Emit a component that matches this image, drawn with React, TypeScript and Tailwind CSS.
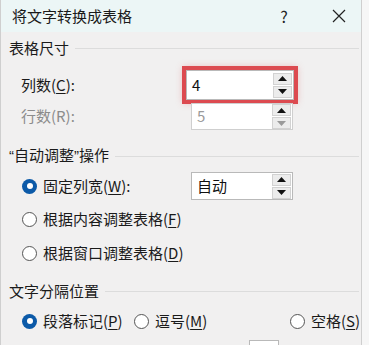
import React from "react";

const font = { fontFamily: '"Noto Sans CJK SC", "Noto Sans", sans-serif' };
const latin = { fontFamily: '"Liberation Sans", sans-serif' };

function Arrow({ up, dim }: { up?: boolean; dim?: boolean }) {
  return (
    <svg width="9" height="5" viewBox="0 0 9 5">
      <polygon points={up ? "0,5 9,5 4.5,0" : "0,0 9,0 4.5,5"} fill={dim ? "#9a9a9a" : "#111"} />
    </svg>
  );
}

function Spin({ value, disabled, className = "" }: { value: string; disabled?: boolean; className?: string }) {
  return (
    <div className={`flex items-stretch bg-white border border-[#b9b9b9] ${className}`}>
      <div className={`flex-1 flex items-center pl-[5px] text-[15px] ${disabled ? "text-[#9a9a9a]" : "text-[#111]"}`}>{value}</div>
      <div className="flex flex-col justify-center gap-[1px] pr-[1px] w-[20px]">
        <div className="h-[12px] flex items-center justify-center bg-[#ececec] border border-[#d2d2d2]">
          <Arrow up />
        </div>
        <div className="h-[12px] flex items-center justify-center bg-[#ececec] border border-[#d2d2d2]">
          <Arrow dim={disabled} />
        </div>
      </div>
    </div>
  );
}

function Radio({ checked, label, k, rest }: { checked?: boolean; label: string; k: string; rest: string }) {
  return (
    <div className="flex items-center gap-[6px]">
      {checked ? (
        <span className="w-[15px] h-[15px] rounded-full bg-[#0c5aa8] flex items-center justify-center">
          <span className="w-[6px] h-[6px] rounded-full bg-white" />
        </span>
      ) : (
        <span className="w-[15px] h-[15px] rounded-full border border-[#555] bg-white" />
      )}
      <span className="text-[15px] text-[#1a1a1a] whitespace-nowrap">
        {label}(<span className="underline underline-offset-2">{k}</span>){rest}
      </span>
    </div>
  );
}

function Group({ title, children }: { title: React.ReactNode; children: React.ReactNode }) {
  return (
    <div>
      <div className="flex items-center h-[22px] pl-[8px] pr-[2px]">
        <span className="text-[15px] text-[#1a1a1a] whitespace-nowrap">{title}</span>
        <div className="flex-1 h-px bg-[#dcdcdc] ml-[6px]" />
      </div>
      {children}
    </div>
  );
}

export default function App() {
  return (
    <div className="w-[369px] h-[345px] overflow-hidden flex bg-[#f6f6f6]" style={font}>
      <div className="w-[362px] h-full flex flex-col border-l border-r border-[#cfcfcf] bg-[#f1f0f0]">
        <div className="h-[32px] shrink-0 flex items-center pl-[11px] bg-[#ecf6f6]">
          <span className="text-[15px] text-[#1a1a1a] flex-1">将文字转换成表格</span>
          <span className="text-[16px] text-[#222] w-[20px] text-center">?</span>
          <span className="w-[20px] flex justify-center ml-[35px] mr-[12px]">
            <svg width="14" height="14" viewBox="0 0 14 14">
              <path d="M1 1L13 13M13 1L1 13" stroke="#222" strokeWidth="1.2" />
            </svg>
          </span>
        </div>
        <div className="flex flex-col pt-[5px]">
          <Group title="表格尺寸">
            <div className="flex items-center h-[30px] pl-[20px] mt-[11px]">
              <span className="w-[165px] text-[15px] text-[#1a1a1a]">
                列数(<span className="underline underline-offset-2">C</span>):
              </span>
              <Spin
                value="4"
                className="w-[108px] h-[30px] outline-[4px] outline-[#dc4a50] shadow-[0_0_7px_3px_rgba(220,74,80,0.35)]"
              />
            </div>
            <div className="flex items-center h-[27px] pl-[20px] mt-[3px]">
              <span className="w-[170px] text-[15px] text-[#8c8c8c]">行数(R):</span>
              <Spin value="5" disabled className="w-[102px] h-[27px] border-[#cfcfcf]" />
            </div>
          </Group>
          <div className="mt-[15px]">
            <Group
              title={
                <>
                  <span style={latin}>“</span>自动调整<span style={latin}>”</span>操作
                </>
              }
            >
              <div className="flex items-center h-[30px] pl-[21px] mt-[4px]">
                <div className="w-[169px]">
                  <Radio checked label="固定列宽" k="W" rest=":" />
                </div>
                <Spin value="自动" className="w-[102px] h-[28px]" />
              </div>
              <div className="flex items-center h-[34px] pl-[21px] mt-[1px]">
                <Radio label="根据内容调整表格" k="F" rest="" />
              </div>
              <div className="flex items-center h-[34px] pl-[21px]">
                <Radio label="根据窗口调整表格" k="D" rest="" />
              </div>
            </Group>
          </div>
          <div className="mt-[10px]">
            <Group title="文字分隔位置">
              <div className="flex items-center h-[30px] pl-[21px] mt-[4px]">
                <div className="w-[112px]">
                  <Radio checked label="段落标记" k="P" rest="" />
                </div>
                <div className="w-[156px]">
                  <Radio label="逗号" k="M" rest="" />
                </div>
                <Radio label="空格" k="S" rest="" />
              </div>
              <div className="flex items-center h-[30px] pl-[21px] mt-[2px]">
                <div className="w-[112px]">
                  <Radio label="制表符" k="T" rest="" />
                </div>
                <div className="w-[115px]">
                  <Radio label="其他字符" k="O" rest=":" />
                </div>
                <div className="w-[30px] h-[26px] bg-white border border-[#b9b9b9]" />
              </div>
            </Group>
          </div>
        </div>
      </div>
    </div>
  );
}
